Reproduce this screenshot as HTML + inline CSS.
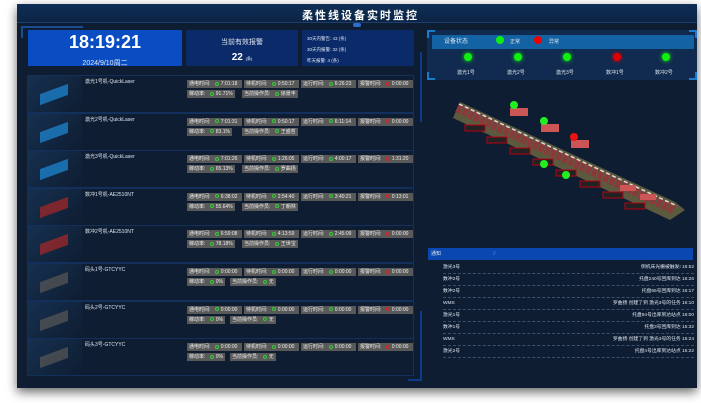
<!DOCTYPE html>
<html><head><meta charset="utf-8"><style>
*{margin:0;padding:0;box-sizing:border-box}
body{width:701px;height:403px;background:#fff;font-family:"Liberation Sans","Noto Sans CJK SC",sans-serif;position:relative;overflow:hidden;color:#dfe6f0}
.dash{position:absolute;left:17px;top:4px;width:680px;height:384px;background:#0e1d32;box-shadow:0 4px 10px rgba(0,0,0,.6)}
.hdr{position:absolute;left:0;top:0;width:680px;height:19px;background:linear-gradient(#0f2e55,#0b2446);border-bottom:1px solid #1b3f6e}
.title{position:absolute;left:285px;top:3px;font-size:11px;font-weight:bold;letter-spacing:2px;color:#fff}
.a{position:absolute}
.clock{left:11px;top:26px;width:154px;height:36px;background:#0a4cc2;text-align:center}
.clock b{display:block;font-size:18px;line-height:20px;margin-top:2px;color:#fff}
.clock span{font-size:7px}
.alarm{left:169px;top:26px;width:112px;height:36px;background:#0b2a6a;text-align:center;font-size:7px}
.stats{left:285px;top:26px;width:112px;height:36px;background:#0b2a6a;font-size:4.5px;padding:3px 5px;line-height:11px}
.row{position:absolute;left:10px;width:387px;height:38px;border:1px solid #132f5c}
.img{position:absolute;left:0;top:0;width:54px;height:36px;background:linear-gradient(135deg,#16304f,#0e1d32)}
.nm{position:absolute;left:57px;top:2px;font-size:5px}
.tg{position:absolute;height:8px;background:#595959;font-size:5px;line-height:8px;padding:0 2px;color:#eee;white-space:nowrap}
.tg i{display:inline-block;width:4px;height:4px;border-radius:50%;border:1px solid #3c3;margin:0 2px 0 3px;vertical-align:-0.5px}
.tg i.r{border-color:#d22}
.sp{left:410px;top:26px;width:270px;height:50px;background:#112a4f}
.bar{position:absolute;left:5px;top:5px;width:262px;height:14px;background:#1363a4;font-size:6px;line-height:14px}
.dot{position:absolute;width:8px;height:8px;border-radius:50%;background:#1e1;box-shadow:0 0 4px #1e1}
.lb{position:absolute;font-size:5px}
.nb{position:absolute;left:411px;top:244px;width:265px;height:12px;background:#0a47b0;font-size:5px;line-height:12px;padding-left:3px}
.li{position:absolute;left:15px;width:251px;height:12px;border-bottom:1px dashed #39506e;font-size:4.8px;line-height:11px}
.li span{float:right}
.cr{position:absolute;width:8px;height:8px;border-color:#1a7ad0;border-style:solid}
</style></head><body>
<div class="dash">
<div class="hdr"><div class="title">柔性线设备实时监控</div><div class="a" style="left:336px;top:19px;width:8px;height:4px;border-radius:3px;background:#2a6fd0"></div></div>
<div class="a" style="left:4px;top:22px;width:62px;height:2px;background:#1a4a90"></div>
<div class="a" style="left:4px;top:22px;width:2px;height:12px;background:#1a4a90"></div>
<div class="a clock"><b>18:19:21</b><span>2024/9/10周二</span></div>
<div class="a alarm"><div style="margin-top:7px">当前有效报警</div><div style="margin-top:5px;font-size:10px;font-weight:bold;color:#fff">22 <span style="font-size:4px;font-weight:normal">(条)</span></div></div>
<div class="a stats">30天内警告: 43 (条)<br>30天内报警: 32 (条)<br>昨天报警: 4 (条)</div>

<div id="rows"></div>

<div class="a" style="left:403px;top:48px;width:2px;height:70px;background:#0c3b8a"></div>
<div class="a" style="left:403px;top:307px;width:2px;height:70px;background:#0c3b8a"></div>
<div class="a" style="left:391px;top:375px;width:12px;height:2px;background:#0c3b8a"></div>

<div class="a sp">
<div class="cr" style="left:0;top:0;border-width:2px 0 0 2px"></div>
<div class="cr" style="right:0;top:0;border-width:2px 2px 0 0"></div>
<div class="cr" style="left:0;bottom:0;border-width:0 0 2px 2px"></div>
<div class="cr" style="right:0;bottom:0;border-width:0 2px 2px 0"></div>
<div class="bar"><span style="margin-left:12px">设备状态</span>
<div class="dot" style="left:64px;top:1px;box-shadow:none"></div><span class="a" style="left:78px;font-size:5px">正常</span>
<div class="dot" style="left:102px;top:1px;background:#e00;box-shadow:none"></div><span class="a" style="left:117px;font-size:5px">异常</span></div>
<div class="dot" style="left:37px;top:23px"></div><div class="lb" style="left:30px;top:39px">激光1号</div>
<div class="dot" style="left:87px;top:23px"></div><div class="lb" style="left:80px;top:39px">激光2号</div>
<div class="dot" style="left:136px;top:23px"></div><div class="lb" style="left:129px;top:39px">激光3号</div>
<div class="dot" style="left:186px;top:23px;background:#d00;box-shadow:0 0 4px #d00"></div><div class="lb" style="left:179px;top:39px">数冲1号</div>
<div class="dot" style="left:235px;top:23px"></div><div class="lb" style="left:228px;top:39px">数冲2号</div>
</div>

<svg class="a" style="left:408px;top:76px" width="272" height="165">
<polygon points="35,22 250,122 260,130 245,140 28,38" fill="#5b5a3e"/>
<line x1="32" y1="28" x2="250" y2="130" stroke="#8a3a3a" stroke-width="9" stroke-dasharray="5 1.5"/>
<line x1="34" y1="24" x2="252" y2="126" stroke="#ddd" stroke-width="1.5" stroke-dasharray="4 2.5"/>
<g fill="#222" stroke="#b01" stroke-width="1">
<rect x="40" y="45" width="20" height="6"/><rect x="62" y="57" width="20" height="6"/><rect x="85" y="68" width="20" height="6"/><rect x="108" y="79" width="20" height="6"/><rect x="131" y="90" width="20" height="6"/><rect x="155" y="101" width="20" height="6"/><rect x="178" y="112" width="20" height="6"/><rect x="200" y="123" width="20" height="6"/></g>
<g fill="#c55"><rect x="85" y="28" width="18" height="8"/><rect x="116" y="44" width="18" height="8"/><rect x="146" y="60" width="18" height="8"/><rect x="195" y="105" width="16" height="6"/><rect x="215" y="114" width="16" height="6"/></g>
<circle cx="89" cy="25" r="4" fill="#2e2"/>
<circle cx="119" cy="41" r="4" fill="#2e2"/>
<circle cx="149" cy="57" r="4" fill="#e11"/>
<circle cx="119" cy="84" r="4" fill="#2e2"/>
<circle cx="141" cy="95" r="4" fill="#2e2"/>
</svg>

<div class="nb">通知<span style="margin-left:52px;color:#4a84e0">//</span></div>
<div class="li" style="left:426px;top:258px">激光3号<span>侧机床光栅被触发! 16:52</span></div>
<div class="li" style="left:426px;top:270px">数冲2号<span>托盘240号回库到达 16:26</span></div>
<div class="li" style="left:426px;top:282px">数冲2号<span>托盘65号回库到达 16:17</span></div>
<div class="li" style="left:426px;top:294px">WMS<span>罗曲扬 创建了到 激光3号的任务 16:10</span></div>
<div class="li" style="left:426px;top:306px">激光1号<span>托盘84号出库到达站点 16:00</span></div>
<div class="li" style="left:426px;top:318px">数冲1号<span>托盘3号回库到达 15:32</span></div>
<div class="li" style="left:426px;top:330px">WMS<span>罗曲扬 创建了到 激光3号的任务 15:24</span></div>
<div class="li" style="left:426px;top:342px">激光2号<span>托盘4号出库到达站点 15:22</span></div>
</div>
<script>
var d=[["激光1号机-QuickLaser","7:01:18","0:50:17","6:26:23","0:00:00","91.71%","徐景丰",0],
["激光2号机-QuickLaser","7:01:31","0:50:17","6:11:14","0:00:00","83.1%","王盛哲",0],
["激光3号机-QuickLaser","7:01:26","1:26:05","4:00:17","1:31:20","65.13%","罗曲扬",0],
["数冲1号机-AE2510NT","6:38:02","2:54:40","3:40:21","0:13:01","55.64%","丁朝林",1],
["数冲2号机-AE2510NT","6:59:08","4:13:59","2:45:09","0:00:00","78.18%","王世宝",1],
["码头1号-GTCYYC","0:00:00","0:00:00","0:00:00","0:00:00","0%","无",2],
["码头2号-GTCYYC","0:00:00","0:00:00","0:00:00","0:00:00","0%","无",2],
["码头3号-GTCYYC","0:00:00","0:00:00","0:00:00","0:00:00","0%","无",2]];
var h="",cols=["#1e86d0","#a02828","#555"];
d.forEach(function(r,i){var y=71+i*37.6;
h+='<div class="row" style="top:'+y+'px"><div class="img"><div class="a" style="left:12px;top:13px;width:28px;height:11px;background:'+cols[r[7]]+';transform:skewY(-20deg);opacity:.75"></div></div><div class="nm">'+r[0]+'</div>'+
'<div class="tg" style="left:159px;top:4px;width:55px">通电时间: <i></i>'+r[1]+'</div>'+
'<div class="tg" style="left:216px;top:4px;width:55px">待机时间: <i></i>'+r[2]+'</div>'+
'<div class="tg" style="left:273px;top:4px;width:55px">运行时间: <i></i>'+r[3]+'</div>'+
'<div class="tg" style="left:330px;top:4px;width:55px">报警时间: <i class="r"></i>'+r[4]+'</div>'+
'<div class="tg" style="left:159px;top:14px">稼动率: <i></i>'+r[5]+'</div>'+
'<div class="tg" style="left:'+(r[5].length>3?214:202)+'px;top:14px">当前操作员: <i></i>'+r[6]+'</div></div>';});
document.getElementById("rows").innerHTML=h;
</script>
</body></html>
